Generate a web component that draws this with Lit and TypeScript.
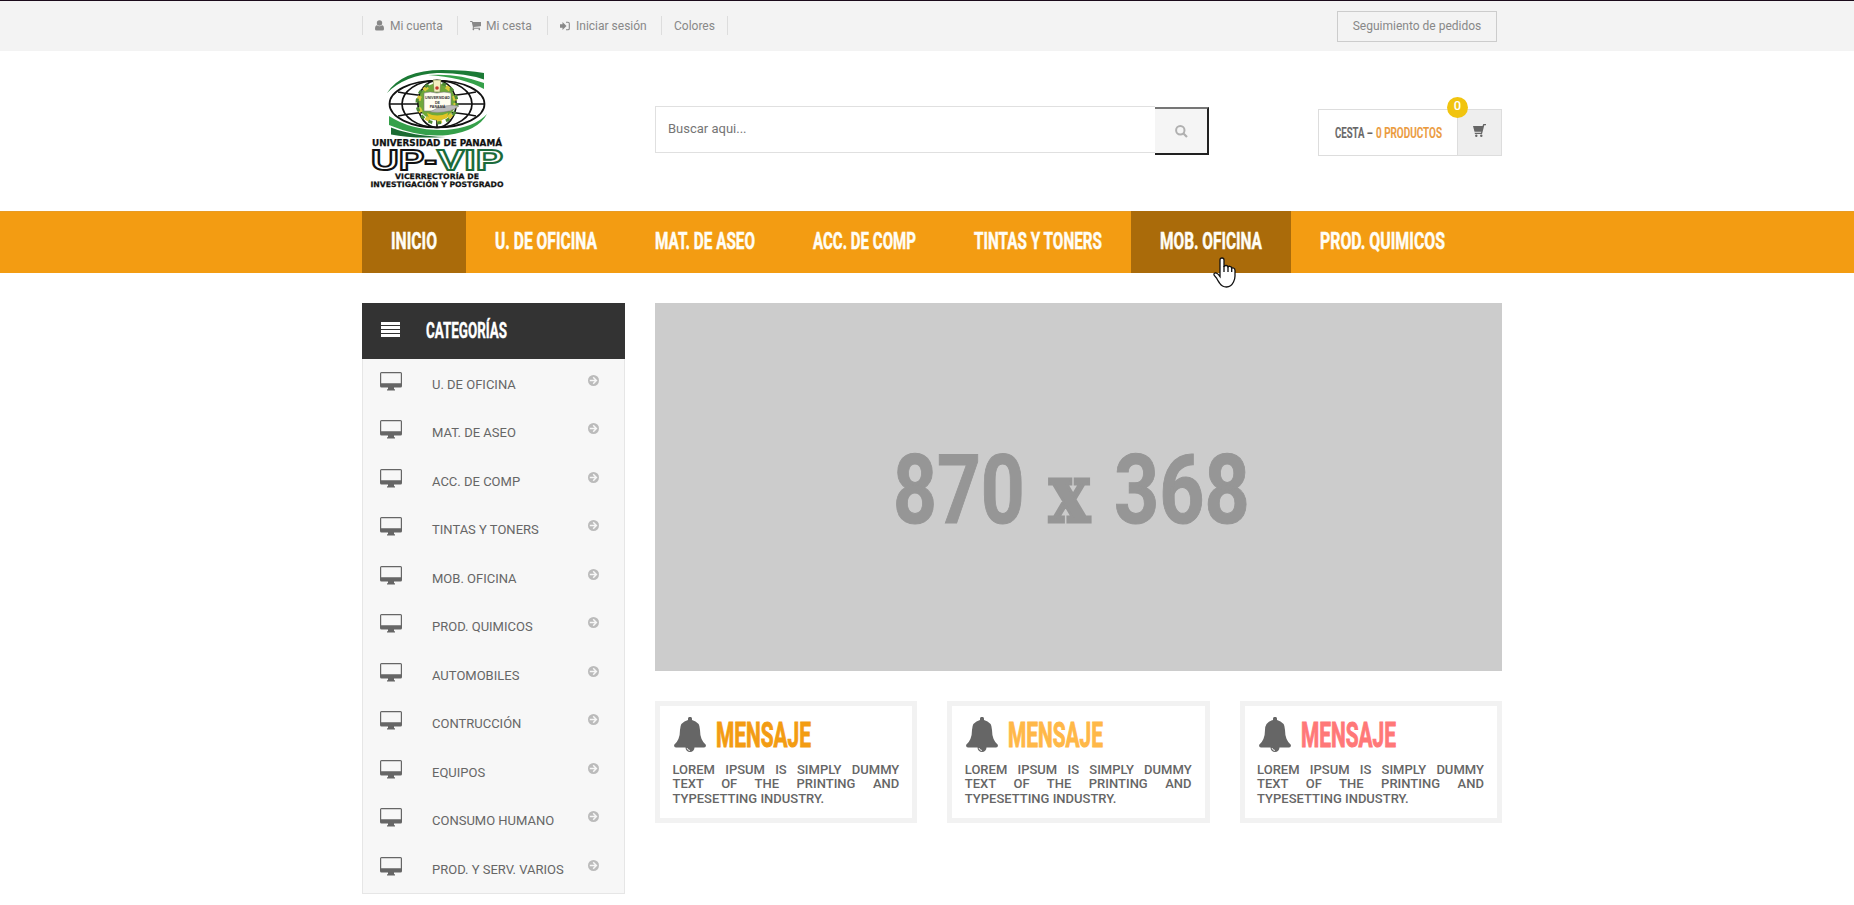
import { LitElement, html, css, svg } from "lit";
import { customElement } from "lit/decorators.js";

const NAV = [
  { t: "INICIO", w: 46, on: true },
  { t: "U. DE OFICINA", w: 102 },
  { t: "MAT. DE ASEO", w: 100 },
  { t: "ACC. DE COMP", w: 103 },
  { t: "TINTAS Y TONERS", w: 128 },
  { t: "MOB. OFICINA", w: 102, on: true },
  { t: "PROD. QUIMICOS", w: 125 },
];
const CATS = ["U. DE OFICINA", "MAT. DE ASEO", "ACC. DE COMP", "TINTAS Y TONERS", "MOB. OFICINA", "PROD. QUIMICOS", "AUTOMOBILES", "CONTRUCCIÓN", "EQUIPOS", "CONSUMO HUMANO", "PROD. Y SERV. VARIOS"];
const CARDS = ["#f39c12", "#ffb848", "#ff7878"];

/* Condensed heading text: a line squeezed to the given width. */
const cond = (t: string, w: number, cap: number, weight = 700, ink = 0.5, sx = 0.68) => html`<svg class="cond" width=${w} height=${cap} aria-label=${t}>
  <text transform="scale(${sx} 1)" x="0" y=${cap} textLength=${w / sx} lengthAdjust="spacingAndGlyphs" font-size=${cap / 0.711} font-weight=${weight} stroke-width=${ink}>${t}</text></svg>`;

const cartPath = svg`<path d="M704 1536q0 52-38 90t-90 38-90-38-38-90 38-90 90-38 90 38 38 90zm896 0q0 52-38 90t-90 38-90-38-38-90 38-90 90-38 90 38 38 90zm128-1088v512q0 24-16.500 42.500t-40.500 21.500l-1044 122q13 60 13 70 0 16-24 64h920q26 0 45 19t19 45-19 45-45 19h-1024q-26 0-45-19t-19-45q0-11 8-31.500t16-36 21.500-40 15.500-29.500l-177-823h-204q-26 0-45-19t-19-45 19-45 45-19h256q16 0 28.500 6.500t19.500 15.500 13 24.500 8 26 5.500 29.500 4.500 26h1201q26 0 45 19t19 45z"/>`;

@customElement("app-root")
export class AppRoot extends LitElement {
  static styles = css`
    :host { display: block; width: 100%; height: 905px; overflow: hidden; background: #fff; color: #666; font-family: Roboto, sans-serif; font-size: 13px; }
    * { box-sizing: border-box; }
    svg { display: block; flex: none; }
    .cond { overflow: visible; fill: currentColor; stroke: currentColor; }
    .wrap { width: 1140px; margin: 0 auto; display: flex; position: relative; left: 5px; }
    .top { height: 51px; background: #f3f3f3; border-top: 1px solid #1a0a1a; }
    .top .wrap { justify-content: space-between; }
    .links { display: flex; margin-top: 15px; height: 19px; border-left: 1px solid #ddd; }
    .link { display: flex; align-items: center; gap: 6px; padding-left: 12px; border-right: 1px solid #ddd; font-size: 12px; line-height: 20px; color: #888; fill: #888; white-space: nowrap; }
    .l1 { width: 95px; } .l2 { width: 90px; gap: 5px; } .l3 { width: 114px; } .l4 { width: 66px; padding-left: 12px; }
    .track { margin: 10px 5px 0 0; width: 160px; height: 31px; border: 1px solid #ccc; font-size: 12px; line-height: 29px; text-align: center; color: #888; }
    .head { height: 160px; }
    .logo { margin: 15px 0 0 4px; width: 142px; }
    .search { display: flex; margin: 55px 0 0 147px; width: 554px; height: 49px; }
    .field { width: 500px; height: 47px; border: 1px solid #e0e0e0; border-right: 0; padding: 0 12px; line-height: 44px; font-size: 13px; color: #757575; }
    .go { margin-top: 1px; width: 54px; height: 48px; background: #f5f5f5; border: 2px solid #212121; border-top-color: #767676; border-left: 0; display: flex; align-items: center; justify-content: center; }
    .cart { position: relative; display: flex; margin: 58px 0 0 109px; width: 184px; height: 47px; border: 1px solid #ddd; }
    .sum { width: 139px; display: flex; align-items: center; padding: 0 0 1px 16px; gap: 3px; color: #666; border-right: 1px solid #ddd; }
    .sum .n { color: #eb9a3c; }
    .basket { flex: 1; background: #eee; display: flex; align-items: center; justify-content: center; padding: 0 0 3px 1px; }
    .badge { position: absolute; left: 128px; top: -13px; width: 21px; height: 21px; border-radius: 50%; background: #f1c40f; color: #fff; text-align: center; font-size: 13px; line-height: 18px; font-weight: 500; }
    .nav { height: 62px; background: #f39c12; border-top: 1px solid #e79b24; color: #fffdf5; }
    .item { height: 62px; margin-top: -1px; padding: 20.500px 29px 0; }
    .item.on { background: #aa6b0a; }
    .body { padding-top: 30px; gap: 30px; align-items: flex-start; }
    .side { width: 263px; }
    .side-h { height: 56px; background: #333; color: #fff; display: flex; align-items: center; padding: 0 0 3px 19px; gap: 26px; fill: #fff; }
    .list { border: 1px solid #e6e6e6; border-top: 0; background: #f7f7f7; height: 535px; display: flex; flex-direction: column; }
    .cat { height: 48.5px; flex: none; display: flex; align-items: flex-start; padding: 12.500px 25px 0 17px; fill: #666; }
    .cat span { flex: 1; padding: 5px 0 0 30px; line-height: 16px; font-size: 13px; }
    .arrow { margin-top: 3px; fill: #bbb; }
    .main { width: 847px; }
    .banner { height: 368px; background: #ccc; }
    .cards { display: flex; gap: 30px; margin-top: 30px; }
    .card { width: 262.300px; height: 122px; border: 5px solid #f2f2f2; padding: 10px 13px; }
    .card-h { display: flex; align-items: center; height: 35px; gap: 10px; padding: 1px 0 0 1px; fill: #666; }
    .card p { margin: 12px 0 0 -0.500px; font-weight: 500; font-size: 13px; line-height: 14.4px; text-align: justify; }
    .hand { position: absolute; left: 851px; top: 45px; z-index: 2; }
  `;

  render() {
    return html`
      <div class="top"><div class="wrap">
        <div class="links">
          <div class="link l1"><svg width="9" height="11" viewBox="0 0 9 11"><circle cx="4.500" cy="3" r="2.700"/><path d="M0 9Q0 5.500 2 5.300Q4.500 7 7 5.300Q9 5.500 9 9Q9 10.500 7.500 10.500H1.500Q0 10.500 0 9Z"/></svg>Mi cuenta</div>
          <div class="link l2"><svg width="11" height="11" viewBox="64 128 1664 1600">${cartPath}</svg>Mi cesta</div>
          <div class="link l3"><svg width="10" height="10" viewBox="0 0 10 10"><path d="M0 3.300H2.500V1L6.500 5L2.500 9V6.700H0Z"/><path d="M6 1.200H8Q9.300 1.200 9.300 2.500V7.500Q9.300 8.800 8 8.800H6" fill="none" stroke="#888" stroke-width="1.100"/></svg>Iniciar sesión</div>
          <div class="link l4">Colores</div>
        </div>
        <div class="track">Seguimiento de pedidos</div>
      </div></div>

      <div class="wrap head">
        <svg class="logo" width="142" height="124" viewBox="366 66 142 124">
          <g fill="none" stroke="#111" stroke-width="1.700">
            <ellipse cx="437" cy="104" rx="47.500" ry="23.500"/><ellipse cx="437" cy="104" rx="35" ry="23.500"/><ellipse cx="437" cy="104" rx="19" ry="23.500"/>
            <path d="M389 104H485M437 80V128M398 92Q437 100 476 92M398 116Q437 108 476 116"/>
          </g>
          <path d="M387 93Q402 70 442 70Q468 70 484 73V79.500Q464 72.500 437 73Q405 75 387 93Z" fill="#1b7a35"/>
          <path d="M428 75Q458 73 484 83V89Q462 77 428 75Z" fill="#35a04a"/>
          <path d="M389 116V125Q420 138 448 135Q478 131 487 114Q474 128 445 130Q412 131 389 116Z" fill="#35a04a"/>
          <path d="M391 127.500V134.500Q412 139 446 137Q412 136 391 127.500Z" fill="#1b6b33"/>
          <circle cx="437" cy="102" r="18.500" fill="#6fa83a"/>
          <circle cx="437" cy="103" r="18.500" fill="none" stroke="#d9c93a" stroke-width="4" stroke-dasharray="5 7"/>
          <circle cx="437" cy="103" r="20" fill="none" stroke="#4c8a34" stroke-width="3" stroke-dasharray="4 5"/>
          <path d="M433 80H441L440 92H434Z" fill="#f3efc0" stroke="#6a7a3a" stroke-width=".6"/>
          <circle cx="437" cy="88" r="1.800" fill="#c23a2c"/>
          <path d="M424 93Q430 91 437 93Q444 91 451 93V111H424Z" fill="#fffdf0" stroke="#777" stroke-width=".6"/>
          <path d="M427 113Q437 118 448 113L447 118Q437 122 429 118Z" fill="#e2c424"/>
          <path d="M430 112Q444 103 459 106Q449 114 430 112Z" fill="#bbb" stroke="#777" stroke-width=".4"/>
          <g font-family="Liberation Sans" font-size="3.600" font-weight="700" text-anchor="middle" fill="#333"><text x="437.500" y="99">UNIVERSIDAD</text><text x="437.500" y="103.500">DE</text><text x="437.500" y="108">PANAMÁ</text></g>
          <g font-family="DejaVu Sans" font-weight="700" fill="#111" stroke="#111" stroke-width=".25">
            <text x="372" y="145.500" font-size="8.300" textLength="130" lengthAdjust="spacingAndGlyphs">UNIVERSIDAD DE PANAMÁ</text>
            <text x="395" y="178.700" font-size="7.500" textLength="84" lengthAdjust="spacingAndGlyphs">VICERRECTORÍA DE</text>
            <text x="370.500" y="186.500" font-size="7.500" textLength="133" lengthAdjust="spacingAndGlyphs">INVESTIGACIÓN Y POSTGRADO</text>
          </g>
          <g font-family="Liberation Sans" font-weight="700" font-size="30" stroke-width="1.900" fill="#fff">
            <text x="371" y="170.200" textLength="66" lengthAdjust="spacingAndGlyphs" stroke="#111">UP-</text>
            <text x="437" y="170.200" textLength="66" lengthAdjust="spacingAndGlyphs" stroke="#1b6b3b">VIP</text>
          </g>
        </svg>
        <div class="search"><div class="field">Buscar aqui...</div>
          <div class="go"><svg width="13" height="13" viewBox="0 0 13 13"><circle cx="5.300" cy="5.300" r="4.200" fill="none" stroke="#b0b0b0" stroke-width="2"/><path d="M8.500 8.500L12 12" stroke="#b0b0b0" stroke-width="2.200"/></svg></div></div>
        <div class="cart">
          <div class="sum">${cond("CESTA –", 38, 11, 600, 0.2)}<span class="n">${cond("0 PRODUCTOS", 66, 11, 600, 0.2)}</span></div>
          <div class="basket"><svg width="14" height="14" viewBox="0 0 14 14"><path d="M0 2H9.500L10.300 0H13V1.200H11.300L9 10H2L1.500 8.800H8L8.300 7.800H1.500Z" fill="#666"/><circle cx="3.300" cy="11.800" r="1.200" fill="#666"/><circle cx="8.300" cy="11.800" r="1.200" fill="#666"/></svg></div>
          <div class="badge">0</div>
        </div>
      </div>

      <div class="nav"><div class="wrap">
        ${NAV.map((n) => html`<div class="item ${n.on ? "on" : ""}">${cond(n.t, n.w, 17)}</div>`)}
        <svg class="hand" width="23" height="31" viewBox="0 0 23 31"><path d="M7 18V3Q7 1 9 1Q11 1 11 3V10Q11 8.500 13 8.500Q15 8.500 15 10.500Q15 9 17 9.300Q18.700 9.500 18.700 11.500Q19 10.500 20.500 11Q22 11.500 22 13.500V19Q22 22 20.500 25Q18 30 13.500 30Q9 30 6.500 26Q5 24 3.500 21L1.300 18.500Q.3 16.500 2 16Q4 15.500 7 19.500Z" fill="#fff" stroke="#111" stroke-width="1.300"/><path d="M11 9V15M15 10V15M18.700 11V15" stroke="#111" stroke-width="1.300"/></svg>
      </div></div>

      <div class="wrap body">
        <div class="side">
          <div class="side-h"><svg width="19" height="15" viewBox="0 0 19 15"><path d="M0 0H19V3H0ZM0 4H19V7H0ZM0 8H19V11H0ZM0 12H19V15H0Z"/></svg>${cond("CATEGORÍAS", 81, 15.5, 700, 0.4)}</div>
          <div class="list">
            ${CATS.map((c) => html`<div class="cat">
              <svg width="22" height="19" viewBox="0 0 22 19"><path fill-rule="evenodd" d="M1.500 0H20.500Q22 0 22 1.500V14Q22 15.500 20.500 15.500H14V17.300H15V18.500H7V17.300H8V15.500H1.500Q0 15.500 0 14V1.500Q0 0 1.500 0ZM1.200 1.200V11.200H20.800V1.200Z"/></svg>
              <span>${c}</span>
              <svg class="arrow" width="11" height="11" viewBox="0 0 11 11"><circle cx="5.500" cy="5.500" r="5.500"/><path d="M1.800 5.500H8.200M5.200 2.300L8.400 5.500L5.200 8.700" fill="none" stroke="#f7f7f7" stroke-width="1.500"/></svg>
            </div>`)}
          </div>
        </div>
        <div class="main">
          <div class="banner"><svg width="847" height="368" viewBox="655 303 847 368" fill="#969696" stroke="#969696" font-weight="700" font-family="Roboto">
            <text transform="translate(893 522.500) scale(.78 1)" font-size="96" textLength="169" lengthAdjust="spacingAndGlyphs" stroke-width="1">870</text>
            <text transform="translate(1049 521.500) scale(.73 1)" font-size="83" font-family="DejaVu Serif" textLength="56" lengthAdjust="spacingAndGlyphs" stroke-width="3">x</text>
            <text transform="translate(1114 522.500) scale(.78 1)" font-size="96" textLength="174" lengthAdjust="spacingAndGlyphs" stroke-width="1">368</text></svg></div>
          <div class="cards">
            ${CARDS.map((c) => html`<div class="card">
              <div class="card-h"><svg width="32" height="35" viewBox="0 0 32 35"><path d="M14 3V1.800A2 2 0 0 1 18 1.800V3Q26 5 26 13Q26 23 32 28Q32 30.500 30 30.500H20.500A4.500 4.500 0 0 1 11.500 30.500H2Q0 30.500 0 28Q6 23 6 13Q6 5 14 3Z"/><path d="M13 31Q13.500 33.300 16 33.500" fill="none" stroke="#fff" stroke-width=".9"/></svg>
                <span style="color:${c}">${cond("MENSAJE", 95, 25, 700, 1, 0.62)}</span></div>
              <p>LOREM IPSUM IS SIMPLY DUMMY TEXT OF THE PRINTING AND TYPESETTING INDUSTRY.</p>
            </div>`)}
          </div>
        </div>
      </div>`;
  }
}
